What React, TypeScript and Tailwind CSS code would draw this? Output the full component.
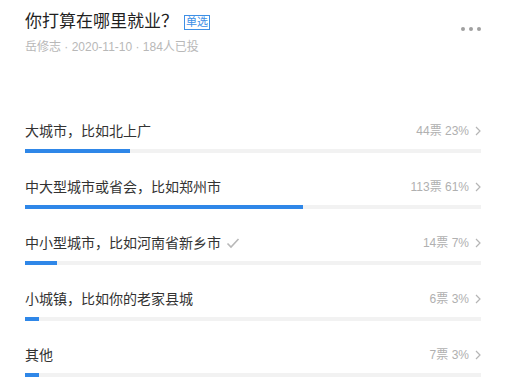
import React from 'react';

const options = [
  { label: '大城市，比如北上广', votes: 44, pct: 23 },
  { label: '中大型城市或省会，比如郑州市', votes: 113, pct: 61 },
  { label: '中小型城市，比如河南省新乡市', votes: 14, pct: 7, voted: true },
  { label: '小城镇，比如你的老家县城', votes: 6, pct: 3 },
  { label: '其他', votes: 7, pct: 3 },
];

const font = { fontFamily: '"Liberation Sans", "Noto Sans CJK SC", sans-serif' };

const Chevron = () => (
  <svg width="6" height="10" viewBox="0 0 6 10" className="ml-[6px]">
    <path d="M1 1 L5 5 L1 9" fill="none" stroke="#b5b5b5" strokeWidth="1.2" />
  </svg>
);

const Check = () => (
  <svg width="14" height="12" viewBox="0 0 14 12" className="ml-[5px]">
    <path d="M1.5 6.5 L5 10 L12.5 2" fill="none" stroke="#b8b8b8" strokeWidth="1.6" />
  </svg>
);

export default function App() {
  return (
    <div className="w-[513px] h-[377px] bg-white overflow-hidden px-[25px] pt-[8px]" style={font}>
      <div className="w-[456px] flex items-start justify-between">
        <div>
          <div className="flex items-center">
            <span className="text-[17px] leading-[28px] text-[#1f1f1f]">你打算在哪里就业？</span>
            <span className="ml-[6px] mt-[1px] border border-[#3d8fe6] text-[#3d8fe6] text-[11px] leading-[13px] px-[1px]">单选</span>
          </div>
          <div className="text-[12px] leading-[18px] text-[#b8b8b8] mt-[2px]">岳修志 · 2020-11-10 · 184人已投</div>
        </div>
        <div className="flex gap-[4px] mt-[19px]">
          <span className="w-[4px] h-[4px] rounded-full bg-[#a0a0a0]" />
          <span className="w-[4px] h-[4px] rounded-full bg-[#a0a0a0]" />
          <span className="w-[4px] h-[4px] rounded-full bg-[#a0a0a0]" />
        </div>
      </div>

      <div className="mt-[65px] w-[456px] flex flex-col gap-[24px]">
        {options.map((o) => (
          <div key={o.label}>
            <div className="flex items-center justify-between h-[20px]">
              <div className="flex items-center text-[14px] text-[#333]">
                {o.label}
                {o.voted && <Check />}
              </div>
              <div className="flex items-center text-[12px] text-[#b0b0b0]">
                <span>{o.votes}票 {o.pct}%</span>
                <Chevron />
              </div>
            </div>
            <div className="mt-[8px] h-[4px] bg-[#f2f2f2]">
              <div className="h-full bg-[#2f87e8]" style={{ width: `${o.pct}%` }} />
            </div>
          </div>
        ))}
      </div>
    </div>
  );
}
